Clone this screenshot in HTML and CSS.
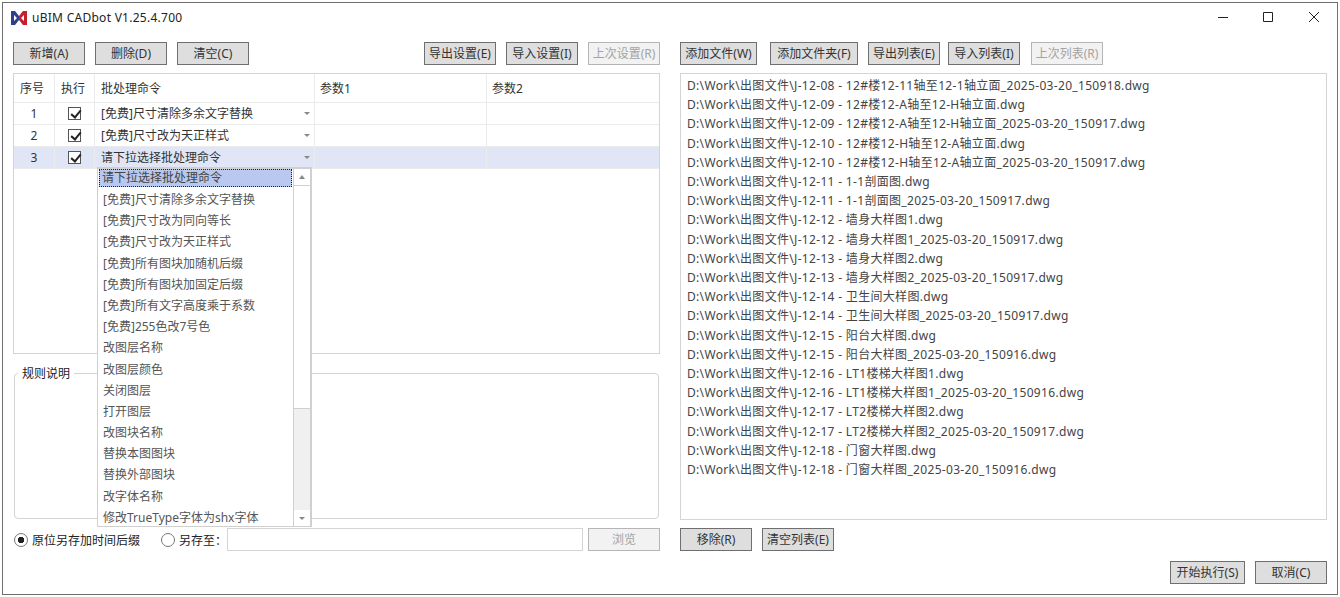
FILE: index.html
```html
<!DOCTYPE html>
<html>

<head>
    <meta charset="UTF-8">
    <title>uBIM CADbot</title>
    <link rel="stylesheet" href="styles.css">
</head>

<body>
    <div class="window">
        <div class="titlebar">
            <svg class="logo" viewBox="0 0 16 14" width="16" height="14">
                <path fill="#2f3f8f" d="M0 0h4l4 5v4l-4 5H0z" />
                <path fill="#c4202e" d="M16 0h-4L8 5v4l4 5h4z" />
                <path fill="#fff" d="M3 4l3 3-3 3zM13 4l-3 3 3 3z" />
            </svg>
            <span class="title">uBIM CADbot V1.25.4.700</span>
            <div class="win-controls">
                <svg viewBox="0 0 12 12" width="12" height="12">
                    <path stroke="#222" fill="none" d="M0 6.500h10" />
                </svg>
                <svg viewBox="0 0 12 12" width="12" height="12">
                    <path stroke="#222" fill="none" d="M.5 1.500h9v9h-9z" />
                </svg>
                <svg viewBox="0 0 12 12" width="12" height="12">
                    <path stroke="#222" fill="none" d="M1 1l10 10M11 1L1 11" />
                </svg>
            </div>
        </div>

        <div class="content">
            <div class="column">
                <div class="toolbar">
                    <button class="btn wide">新增(A)</button>
                    <button class="btn wide">删除(D)</button>
                    <button class="btn wide">清空(C)</button>
                    <div class="spacer"></div>
                    <button class="btn wide">导出设置(E)</button>
                    <button class="btn wide">导入设置(I)</button>
                    <button class="btn wide" disabled>上次设置(R)</button>
                </div>

                <div class="grid">
                    <div class="row head">
                        <div class="cell c-no">序号</div>
                        <div class="cell c-run">执行</div>
                        <div class="cell c-cmd">批处理命令</div>
                        <div class="cell c-arg">参数1</div>
                        <div class="cell c-arg">参数2</div>
                    </div>
                    <div class="row">
                        <div class="cell c-no center">1</div>
                        <div class="cell c-run center"><span class="check"></span></div>
                        <div class="cell c-cmd combo">[免费]尺寸清除多余文字替换<i class="caret"></i></div>
                        <div class="cell c-arg"></div>
                        <div class="cell c-arg"></div>
                    </div>
                    <div class="row">
                        <div class="cell c-no center">2</div>
                        <div class="cell c-run center"><span class="check"></span></div>
                        <div class="cell c-cmd combo">[免费]尺寸改为天正样式<i class="caret"></i></div>
                        <div class="cell c-arg"></div>
                        <div class="cell c-arg"></div>
                    </div>
                    <div class="row selected">
                        <div class="cell c-no center">3</div>
                        <div class="cell c-run center"><span class="check"></span></div>
                        <div class="cell c-cmd combo">请下拉选择批处理命令<i class="caret"></i></div>
                        <div class="cell c-arg"></div>
                        <div class="cell c-arg"></div>
                    </div>
                </div>

                <fieldset class="rules">
                    <legend>规则说明</legend>
                </fieldset>

                <div class="save-row">
                    <label class="radio on">原位另存加时间后缀</label>
                    <label class="radio">另存至：</label>
                    <input class="path" type="text">
                    <button class="btn wide" disabled>浏览</button>
                </div>
            </div>

            <div class="column">
                <div class="toolbar">
                    <button class="btn w77">添加文件(W)</button>
                    <button class="btn w88">添加文件夹(F)</button>
                    <button class="btn wide">导出列表(E)</button>
                    <button class="btn wide tight">导入列表(I)</button>
                    <button class="btn wide loose" disabled>上次列表(R)</button>
                </div>

                <div class="files">
                    <div>D:\Work\出图文件\J-12-08 - 12#楼12-11轴至12-1轴立面_2025-03-20_150918.dwg</div>
                    <div>D:\Work\出图文件\J-12-09 - 12#楼12-A轴至12-H轴立面.dwg</div>
                    <div>D:\Work\出图文件\J-12-09 - 12#楼12-A轴至12-H轴立面_2025-03-20_150917.dwg</div>
                    <div>D:\Work\出图文件\J-12-10 - 12#楼12-H轴至12-A轴立面.dwg</div>
                    <div>D:\Work\出图文件\J-12-10 - 12#楼12-H轴至12-A轴立面_2025-03-20_150917.dwg</div>
                    <div>D:\Work\出图文件\J-12-11 - 1-1剖面图.dwg</div>
                    <div>D:\Work\出图文件\J-12-11 - 1-1剖面图_2025-03-20_150917.dwg</div>
                    <div>D:\Work\出图文件\J-12-12 - 墙身大样图1.dwg</div>
                    <div>D:\Work\出图文件\J-12-12 - 墙身大样图1_2025-03-20_150917.dwg</div>
                    <div>D:\Work\出图文件\J-12-13 - 墙身大样图2.dwg</div>
                    <div>D:\Work\出图文件\J-12-13 - 墙身大样图2_2025-03-20_150917.dwg</div>
                    <div>D:\Work\出图文件\J-12-14 - 卫生间大样图.dwg</div>
                    <div>D:\Work\出图文件\J-12-14 - 卫生间大样图_2025-03-20_150917.dwg</div>
                    <div>D:\Work\出图文件\J-12-15 - 阳台大样图.dwg</div>
                    <div>D:\Work\出图文件\J-12-15 - 阳台大样图_2025-03-20_150916.dwg</div>
                    <div>D:\Work\出图文件\J-12-16 - LT1楼梯大样图1.dwg</div>
                    <div>D:\Work\出图文件\J-12-16 - LT1楼梯大样图1_2025-03-20_150916.dwg</div>
                    <div>D:\Work\出图文件\J-12-17 - LT2楼梯大样图2.dwg</div>
                    <div>D:\Work\出图文件\J-12-17 - LT2楼梯大样图2_2025-03-20_150917.dwg</div>
                    <div>D:\Work\出图文件\J-12-18 - 门窗大样图.dwg</div>
                    <div>D:\Work\出图文件\J-12-18 - 门窗大样图_2025-03-20_150916.dwg</div>
                </div>

                <div class="toolbar">
                    <button class="btn wide">移除(R)</button>
                    <button class="btn wide">清空列表(E)</button>
                </div>
            </div>
        </div>

        <div class="footer">
            <button class="btn w75">开始执行(S)</button>
            <button class="btn wide">取消(C)</button>
        </div>

        <div class="dropdown">
            <div class="options">
                <div class="option current">请下拉选择批处理命令</div>
                <div class="option">[免费]尺寸清除多余文字替换</div>
                <div class="option">[免费]尺寸改为同向等长</div>
                <div class="option">[免费]尺寸改为天正样式</div>
                <div class="option">[免费]所有图块加随机后缀</div>
                <div class="option">[免费]所有图块加固定后缀</div>
                <div class="option">[免费]所有文字高度乘于系数</div>
                <div class="option">[免费]255色改7号色</div>
                <div class="option">改图层名称</div>
                <div class="option">改图层颜色</div>
                <div class="option">关闭图层</div>
                <div class="option">打开图层</div>
                <div class="option">改图块名称</div>
                <div class="option">替换本图图块</div>
                <div class="option">替换外部图块</div>
                <div class="option">改字体名称</div>
                <div class="option">修改TrueType字体为shx字体</div>
            </div>
            <div class="scrollbar">
                <div class="arrow"><i class="caret up"></i></div>
                <div class="thumb"></div>
                <div class="track"></div>
                <div class="arrow"><i class="caret"></i></div>
            </div>
        </div>
    </div>
</body>

</html>
```

FILE: styles.css
```css
* {
    box-sizing: border-box;
}

body {
    margin: 0;
    padding: 2px;
    background: #fff;
    font-family: "Noto Sans", "Noto Sans CJK SC", sans-serif;
    font-size: 12px;
    color: #333;
}

.window {
    position: relative;
    height: 593px;
    border: 1px solid #6f6f6f;
    display: flex;
    flex-direction: column;
    overflow: hidden;
}

.titlebar {
    height: 29px;
    display: flex;
    align-items: center;
    padding-left: 8px;
    flex: none;
}

.logo {
    margin-right: 5px;
}

.title {
    letter-spacing: 0.27px;
    color: #222;
}

.win-controls {
    margin-left: auto;
    display: flex;
    gap: 33px;
    padding-right: 17px;
}

.win-controls svg {
    margin-top: -1px;
}

.content {
    display: flex;
    gap: 20px;
    padding: 10px 10px 0;
    height: 520px;
    flex: none;
}

.column {
    width: 647px;
    display: flex;
    flex-direction: column;
}

.toolbar {
    display: flex;
    gap: 10px;
    height: 23px;
    flex: none;
}

.spacer {
    flex: 1;
}

.btn {
    height: 23px;
    padding: 0;
    border: 1px solid #6f6f6f;
    border-radius: 0;
    background: #dedede;
    color: #333;
    font: inherit;
    line-height: 20px;
    white-space: nowrap;
}

.btn:disabled {
    background: #f2f2f2;
    border-color: #b5b5b5;
    color: #a3a3a3;
}

.wide {
    width: 72px;
}

.w77 {
    width: 77px;
    margin-right: 3px;
}

.w88 {
    width: 88px;
}

.w75 {
    width: 75px;
}

.tight {
    margin-left: -2px;
}

.loose {
    margin-left: 1px;
}

.grid {
    margin-top: 8px;
    height: 281px;
    border: 1px solid #d4d4d4;
    flex: none;
}

.row {
    display: flex;
    height: 22px;
    border-bottom: 1px solid #ebebeb;
}

.row.head {
    height: 29px;
}

.row.selected {
    background: #e0e6f6;
}

.cell {
    display: flex;
    align-items: center;
    border-right: 1px solid #ebebeb;
    padding-left: 6px;
    padding-bottom: 1px;
    flex: none;
}

.row.head .cell {
    padding-bottom: 0;
}

.center {
    justify-content: center;
    padding-left: 0;
}

.c-no {
    width: 41px;
}

.c-run {
    width: 40px;
}

.c-cmd {
    width: 220px;
}

.c-arg {
    width: 172px;
    padding-left: 5px;
}

.c-arg:last-child {
    border-right: 0;
}

.combo {
    justify-content: space-between;
    padding-right: 4px;
}

.caret {
    display: block;
    width: 0;
    height: 0;
    border-left: 3px solid transparent;
    border-right: 3px solid transparent;
    border-top: 3px solid #888;
}

.caret.up {
    border-top: 0;
    border-bottom: 4px solid #888;
}

.check {
    width: 13px;
    height: 13px;
    border: 1px solid #555;
    background: #fff;
    position: relative;
}

.check::after {
    content: "";
    position: absolute;
    left: 3.500px;
    top: 0.500px;
    width: 4px;
    height: 8px;
    border: solid #222;
    border-width: 0 2px 2px 0;
    transform: rotate(40deg);
}

.rules {
    margin: 19px 1px 0;
    padding: 0;
    height: 146px;
    border: 1px solid #d4d4d4;
    border-radius: 4px;
    flex: none;
}

.rules legend {
    margin-left: 3px;
    padding: 0 4px;
    line-height: 0;
    color: #222;
}

.save-row {
    margin-top: 9px;
    display: flex;
    align-items: center;
    height: 23px;
}

.radio {
    display: flex;
    align-items: center;
    gap: 4px;
    color: #222;
    margin-left: 1px;
    white-space: nowrap;
    flex: none;
}

.radio::before {
    content: "";
    width: 12px;
    height: 12px;
    border: 1px solid #777;
    border-radius: 50%;
    background: #fff;
}

.radio.on::before {
    background: radial-gradient(circle, #222 3px, #fff 3.500px);
}

.radio + .radio {
    margin-left: 21px;
}

.path {
    width: 356px;
    height: 23px;
    margin-right: 5px;
    border: 1px solid #d4d4d4;
    outline: none;
    flex: none;
}

.files {
    margin: 8px 0;
    height: 447px;
    padding: 2px 6px;
    border: 1px solid #d4d4d4;
    line-height: 19.200px;
    letter-spacing: 0.32px;
    color: #444;
    flex: none;
}

.footer {
    position: absolute;
    right: 10px;
    bottom: 10px;
    display: flex;
    gap: 10px;
}

.dropdown {
    position: absolute;
    left: 94px;
    top: 164px;
    width: 215px;
    height: 360px;
    display: flex;
    background: #fff;
    border: 1px solid #d0d0d0;
    border-top-width: 2px;
    border-right-width: 2px;
    color: #555;
}

.options {
    flex: 1;
    padding: 0 1px;
    overflow: hidden;
}

.option {
    height: 21.200px;
    line-height: 20px;
    padding-left: 4px;
    white-space: nowrap;
}

.option.current {
    height: 18px;
    line-height: 17px;
    margin-bottom: 3px;
    padding-left: 3px;
    background: #b8c8ee;
    outline: 1px dotted #223;
    outline-offset: -1px;
    color: #444;
}

.scrollbar {
    width: 17px;
    display: flex;
    flex-direction: column;
    border-left: 1px solid #d0d0d0;
}

.arrow {
    height: 16px;
    flex: none;
    display: flex;
    align-items: center;
    justify-content: center;
    background: #fff;
}

.thumb {
    height: 224px;
    background: #fff;
    border-bottom: 1px solid #d0d0d0;
    border-top: 1px solid #d0d0d0;
    flex: none;
}

.track {
    flex: 1;
    background: #f0f0f0;
}
```
